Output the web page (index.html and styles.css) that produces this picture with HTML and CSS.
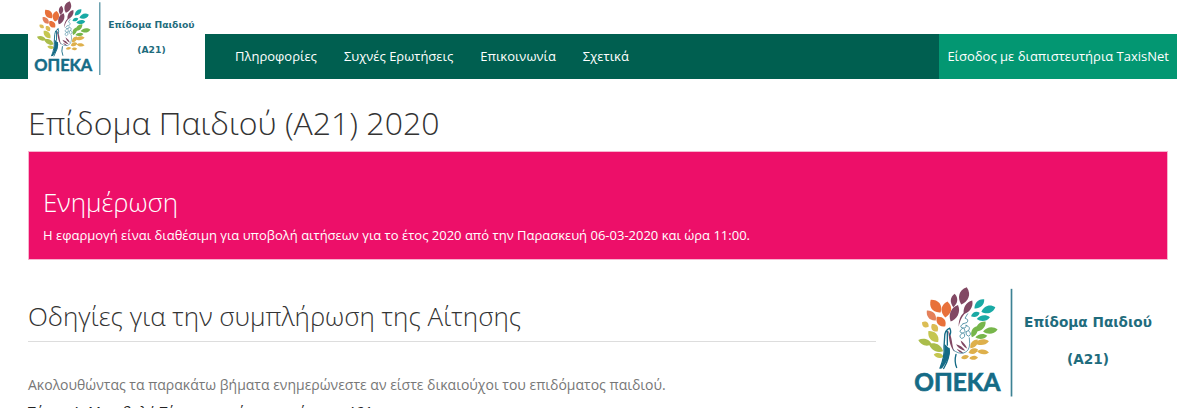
FILE: index.html
```html
<!DOCTYPE html>
<html lang="el">
<head>
<meta charset="utf-8">
<title>Επίδομα Παιδιού (Α21) 2020</title>
<link rel="stylesheet" href="styles.css">
</head>
<body>
<svg class="defs" aria-hidden="true">
  <defs>
    <path id="leaf" d="M-1 0C-.5 -1.4 .4 -1.8 1 0C.4 1.8 -.5 1.4 -1 0Z"/>
    <symbol id="logo" viewBox="40 20 720 332">
      <g fill="#e8713a">
        <use href="#leaf" transform="translate(105 77) rotate(52) scale(24 12)"/>
        <use href="#leaf" transform="translate(137 87) rotate(-82) scale(24 12)"/>
        <use href="#leaf" transform="translate(92 105) rotate(48) scale(20 9)" fill="#e4805a"/>
        <use href="#leaf" transform="translate(121 123) rotate(48) scale(19 10)"/>
      </g>
      <g fill="#c5c650">
        <use href="#leaf" transform="translate(74 132) rotate(35) scale(12 7)" fill="#dbbd54"/>
        <use href="#leaf" transform="translate(102 142) rotate(52) scale(14 8)" fill="#dbbd54"/>
        <use href="#leaf" transform="translate(98 168) rotate(48) scale(22 10)"/>
        <use href="#leaf" transform="translate(73 185) rotate(18) scale(21 8)" fill="#aabd4b"/>
        <use href="#leaf" transform="translate(106 201) rotate(28) scale(24 9)" fill="#aabd4b"/>
        <use href="#leaf" transform="translate(114 225) rotate(12) scale(15 6)"/>
      </g>
      <g fill="#814863">
        <use href="#leaf" transform="translate(160 60) rotate(-84) scale(20 8)"/>
        <use href="#leaf" transform="translate(190 46) rotate(-72) scale(27 12)"/>
        <use href="#leaf" transform="translate(202 80) rotate(-58) scale(24 8)"/>
        <use href="#leaf" transform="translate(161 98) rotate(-66) scale(27 10)"/>
        <path d="M202 91C184 104 178 122 174 139C173 112 186 95 202 91ZM142 150C157 170 151 191 162 215C144 194 146 170 142 150Z"/>
        <path d="M166 191Q184 195 194 211Q175 207 166 191ZM168 205Q181 210 189 219Q175 217 168 205ZM180 180Q193 188 200 205Q183 197 180 180Z"/>
      </g>
      <g fill="#19aaa5">
        <use href="#leaf" transform="translate(236 70) rotate(-43) scale(20 8)"/>
        <use href="#leaf" transform="translate(263 87) rotate(-18) scale(22 9)"/>
        <use href="#leaf" transform="translate(224 102) rotate(-22) scale(14 6)"/>
        <use href="#leaf" transform="translate(248 113) rotate(-8) scale(20 7)"/>
      </g>
      <g fill="#77b64b">
        <use href="#leaf" transform="translate(240 138) rotate(-45) scale(21 8)"/>
        <use href="#leaf" transform="translate(269 150) rotate(-8) scale(22 8)"/>
        <use href="#leaf" transform="translate(221 154) rotate(-66) scale(18 7)"/>
        <use href="#leaf" transform="translate(242 168) rotate(-8) scale(18 6)"/>
      </g>
      <g fill="#deb04c">
        <use href="#leaf" transform="translate(220 190) rotate(-50) scale(17 7)"/>
        <use href="#leaf" transform="translate(244 185) rotate(-8) scale(21 7)"/>
        <use href="#leaf" transform="translate(218 212) rotate(-18) scale(15 7)"/>
        <use href="#leaf" transform="translate(247 214) rotate(6) scale(18 6)"/>
        <use href="#leaf" transform="translate(193 230) rotate(-12) scale(12 5)"/>
        <use href="#leaf" transform="translate(219 232) rotate(-4) scale(13 5)"/>
      </g>
      <g fill="none" stroke="#156b86" stroke-width="4" stroke-linecap="round" stroke-linejoin="round">
        <path d="M147 143Q132 149 132 169L130 199Q133 225 118 263M147 143Q153 155 147 165M140 153V194M145 204Q149 230 129 264M166 222Q160 243 168 261"/>
        <path stroke-width="2" d="M201 100L193 113Q206 117 199 126L187 130M187 130Q174 139 185 142Q198 145 196 134M186 143Q170 154 185 158Q198 157 190 144M197 135Q211 139 204 150L196 154M204 151Q216 163 203 167Q194 164 196 155M185 158Q171 167 183 174Q197 170 190 159M157 207Q172 222 190 217Q206 212 207 190L206 172"/>
      </g>
      <path fill="#156b86" d="M131 190L146 204Q154 223 124 264H117Q134 233 131 190Z"/>
      <path fill="#3d8294" d="M330 25H335V348H330Z"/>
      <text class="logo-name" x="170" y="332" text-anchor="middle">ΟΠΕΚΑ</text>
      <text class="logo-label" x="562" y="138" text-anchor="middle">Επίδομα Παιδιού</text>
      <text class="logo-label" x="562" y="250" text-anchor="middle">(Α21)</text>
    </symbol>
  </defs>
</svg>

<header class="header">
  <a class="brand" href="#" aria-label="ΟΠΕΚΑ – Επίδομα Παιδιού (Α21)"><svg class="brand-logo"><use href="#logo"/></svg></a>
  <nav class="nav">
    <a href="#">Πληροφορίες</a>
    <a href="#">Συχνές Ερωτήσεις</a>
    <a href="#">Επικοινωνία</a>
    <a href="#">Σχετικά</a>
    <a class="login" href="#">Είσοδος με διαπιστευτήρια TaxisNet</a>
  </nav>
</header>

<main class="page">
  <h1>Επίδομα Παιδιού (Α21) 2020</h1>
  <section class="notice">
    <h2>Ενημέρωση</h2>
    <p>Η εφαρμογή είναι διαθέσιμη για υποβολή αιτήσεων για το έτος 2020 από την Παρασκευή 06-03-2020 και ώρα 11:00.</p>
  </section>
  <div class="columns">
    <section class="guide">
      <h2>Οδηγίες για την συμπλήρωση της Αίτησης</h2>
      <p>Ακολουθώντας τα παρακάτω βήματα ενημερώνεστε αν είστε δικαιούχοι του επιδόματος παιδιού.</p>
      <h3>Τύπος Α. Μεταβολή Τέκνων, γονέων της αίτησης Α21</h3>
    </section>
    <aside class="side"><svg class="side-logo" role="img" aria-label="ΟΠΕΚΑ"><use href="#logo"/></svg></aside>
  </div>
</main>
</body>
</html>
```
FILE: styles.css
```css
* { box-sizing: border-box; }
html { overflow: hidden; }
body {
  margin: 0;
  background: #fff;
  color: #333;
  font: 13px/20px "Open Sans", "Noto Sans", sans-serif;
}
h1, h2, h3, p { margin: 0; }
h1, h2 { font-weight: 300; }
.defs { position: absolute; width: 0; height: 0; }

.header {
  display: flex;
  align-items: flex-end;
  padding-left: 28px;
  background: linear-gradient(#fff 34px, #005f50 34px);
}
.brand {
  width: 177px;
  height: 79px;
  padding: 1px 6px;
  background: #fff;
}
.brand-logo { display: block; width: 162px; height: 75px; }
.nav { display: flex; flex: 1; padding-left: 17px; }
.nav a {
  padding: 12px 14px 13px 13px;
  color: #fff;
  text-decoration: none;
  white-space: nowrap;
}
.nav .login { margin-left: auto; padding-right: 8px; padding-left: 8px; background: #039772; }

.logo-name { fill: #156b86; font: 700 73px Lato, "Open Sans", sans-serif; stroke: #156b86; stroke-width: 2px; }
.logo-label { fill: #1f6c7d; font: 700 41px "DejaVu Sans", sans-serif; }

.page { padding: 24px 9px 0 28px; }
h1 { font-size: 32px; line-height: 40px; }
.notice {
  margin-top: 8px;
  padding: 34px 14px 14px;
  border: 1px solid #f7b5d0;
  background: #ed0f69;
  color: #fff;
}
.notice h2 { font-size: 26px; line-height: 32px; }
.notice p { margin-top: 7px; }

.columns { display: flex; gap: 36px; }
.guide { flex: 1; }
.guide h2 {
  margin-top: 40px;
  padding-bottom: 9px;
  border-bottom: 1px solid #ddd;
  font-size: 26px;
  line-height: 32px;
}
.guide p { margin-top: 33px; color: #777; font-size: 14px; }
.guide h3 { margin-top: 7px; color: #222; font-size: 14px; font-weight: 400; }
.side { width: 256px; padding: 27px 0 0 2px; }
.side-logo { display: block; width: 240px; height: 111px; }
```
